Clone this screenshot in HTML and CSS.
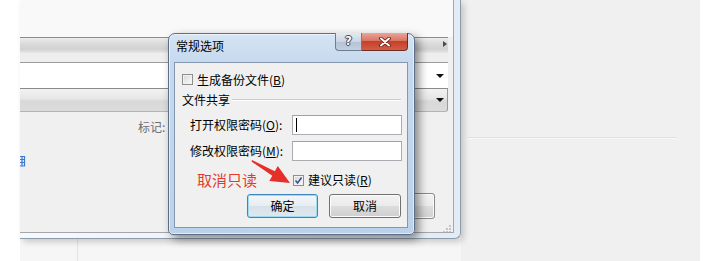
FILE: index.html
```html
<!DOCTYPE html>
<html lang="zh-CN">
<head>
<meta charset="utf-8">
<title>常规选项</title>
<link rel="stylesheet" href="styles.css">
</head>
<body>
<div class="screen">
  <div class="gutter"></div>
  <div class="parent-col">
    <div class="parent">
      <div class="parent-body">
        <div class="pb-top"></div>
        <div class="pb-bar1"><span class="arr-right"></span></div>
        <div class="pb-field"><span class="arr-down"></span></div>
        <div class="pb-bar2"><span class="arr-down"></span></div>
        <div class="pb-rest">
          <div class="tag-row">标记:</div>
          <div class="link-row">
            <svg class="link-icon" width="6" height="12" viewBox="0 0 6 12">
              <path d="M0 1.5 H4.5 V11 H0 M0 4.5 H4.5 M0 7.5 H4.5 M2 1.5 V11" fill="none" stroke="#3a7bd0" stroke-width="1.2"/>
            </svg>
          </div>
          <div class="pbtn-row"><span class="pbtn"></span></div>
          <svg class="grip" width="8" height="8" viewBox="0 0 8 8">
            <rect x="6" y="0" width="2" height="2" fill="#c4c4c4"/>
            <rect x="3" y="3" width="2" height="2" fill="#c4c4c4"/>
            <rect x="6" y="3" width="2" height="2" fill="#c4c4c4"/>
            <rect x="0" y="6" width="2" height="2" fill="#c4c4c4"/>
            <rect x="3" y="6" width="2" height="2" fill="#c4c4c4"/>
            <rect x="6" y="6" width="2" height="2" fill="#c4c4c4"/>
          </svg>
        </div>
      </div>
    </div>
    <div class="below"><span class="below-line"></span></div>
  </div>
  <div class="desk"><div class="desk-line"></div></div>
  <div class="gutter"></div>

  <div class="dlg">
    <div class="dlg-title">
      <span class="dlg-caption">常规选项</span>
      <div class="cap-btns">
        <span class="cap-help">?</span>
        <span class="cap-close">
          <svg width="12" height="10" viewBox="0 0 12 10">
            <path d="M2 1.5 L10 8.5 M10 1.5 L2 8.5" stroke="#5b1a12" stroke-width="3.6" stroke-linecap="round"/>
            <path d="M2 1.5 L10 8.5 M10 1.5 L2 8.5" stroke="#ffffff" stroke-width="2" stroke-linecap="round"/>
          </svg>
        </span>
      </div>
    </div>
    <div class="dlg-content">
      <div class="chk-row"><span class="chk"></span><span class="chk-text">生成备份文件(<u>B</u>)</span></div>
      <div class="group-row"><span>文件共享</span><span class="group-line"></span></div>
      <div class="pw-row"><span class="pw-label">打开权限密码(<u>O</u>):</span><span class="pw-input"><span class="caret"></span></span></div>
      <div class="pw-row"><span class="pw-label">修改权限密码(<u>M</u>):</span><span class="pw-input"></span></div>
      <div class="note-row">
        <span class="note">取消只读</span>
        <span class="chk">
          <svg width="9" height="9" viewBox="0 0 9 9"><path d="M1.5 4.5 L3.6 7 L7.6 1.5" fill="none" stroke="#3a548f" stroke-width="1.6"/></svg>
        </span>
        <span class="chk-text">建议只读(<u>R</u>)</span>
      </div>
      <div class="btn-row">
        <span class="btn btn-default">确定</span>
        <span class="btn">取消</span>
      </div>
      <svg class="arrow" width="232" height="164" viewBox="0 0 232 164">
        <polygon points="77,97 99.8,108.3 102.8,103.1 115,120 94.3,117.9 97.3,112.7 76.5,98.6" fill="#e5302a"/>
      </svg>
    </div>
  </div>
</div>
</body>
</html>
```

FILE: styles.css
```css
* { box-sizing: border-box; }
html, body { margin: 0; padding: 0; }
body {
  width: 720px;
  height: 261px;
  overflow: hidden;
  background: #fff;
  font-family: "Noto Sans CJK SC", "Noto Sans", sans-serif;
  font-size: 12px;
  color: #000;
}
.screen { position: relative; display: flex; width: 720px; height: 261px; }
.gutter { width: 20px; flex: none; background: #fff; }

/* parent window (behind) */
.parent-col { width: 441px; flex: none; display: flex; flex-direction: column; }
.parent {
  position: relative;
  z-index: 1;
  height: 239px;
  flex: none;
  border-right: 1px solid #8d9aa9;
  border-bottom: 1px solid #8d9aa9;
  border-bottom-right-radius: 6px;
  background: linear-gradient(to right, #f6f9fc, #e3ebf4);
  padding: 0 6px 5px 0;
  box-shadow: 3px 3px 6px rgba(0,0,0,.18);
}
.parent-body {
  height: 100%;
  border-right: 1px solid #a6a6a6;
  border-bottom: 1px solid #a6a6a6;
  background: #f0f0f0;
  display: flex;
  flex-direction: column;
  overflow: hidden;
}
.pb-top { height: 37px; flex: none; background: #f9f9f9; }
.pb-bar1 {
  height: 25px; flex: none; margin-right: 5px;
  border-top: 1px solid #8c8c8c;
  background: linear-gradient(#ececec 0, #dadada 6px, #d2d2d2 11px, #dfdfdf 14px, #ededed 15px, #efefef 100%);
  display: flex; justify-content: flex-end; align-items: flex-start;
  padding: 3px 1px 0 0;
}
.pb-field {
  height: 26px; flex: none; margin-right: 5px;
  border-top: 1px solid #9a9a9a;
  background: #fff;
  display: flex; justify-content: flex-end; align-items: center;
  padding-right: 4px;
}
.pb-bar2 {
  height: 24px; flex: none; margin-right: 5px;
  border-top: 1px solid #8a8a8a;
  border-right: 1px solid #9a9a9a;
  border-bottom: 1px solid #b4b4b4;
  border-bottom-right-radius: 3px;
  background: linear-gradient(#f2f2f2 0, #e6e6e6 45%, #d8d8d8 55%, #dcdcdc 100%);
  display: flex; justify-content: flex-end; align-items: center;
  padding-right: 3px;
}
.arr-right {
  width: 0; height: 0;
  border-left: 4px solid #4a4a4a;
  border-top: 3px solid transparent;
  border-bottom: 3px solid transparent;
}
.arr-down {
  width: 0; height: 0;
  border-top: 4px solid #111;
  border-left: 4px solid transparent;
  border-right: 4px solid transparent;
}
.pb-rest { flex: 1; display: flex; flex-direction: column; }
.tag-row { margin-top: 7px; height: 16px; line-height: 16px; padding-left: 118px; color: #6e6e6e; }
.link-row { margin-top: 20px; height: 12px; display: flex; }
.link-icon { display: block; }
.pbtn-row { margin-top: 26px; height: 26px; display: flex; justify-content: flex-end; padding-right: 18px; }
.pbtn {
  width: 72px; height: 26px;
  border: 1px solid #8a8a8a; border-radius: 3px;
  background: linear-gradient(#f2f2f2, #ebebeb 50%, #dddddd 50%, #d2d2d2);
  box-shadow: inset 0 0 0 1px #fafafa;
}
.grip { align-self: flex-end; margin-top: 6px; margin-right: 2px; }
.below { flex: 1; background: #f6f6f6; padding-left: 57px; }
.below-line { display: block; width: 1px; height: 100%; background: #e3e3e3; }

.desk { width: 239px; flex: none; background: #f0f0f0; padding-top: 137px; }
.desk-line { margin-left: 6px; width: 210px; height: 2px; border-top: 1px solid #e2e2e2; border-bottom: 1px solid #f8f8f8; }

/* dialog */
.dlg {
  position: absolute;
  left: 168px; top: 33px;
  width: 247px; height: 202px;
  z-index: 5;
  border: 1px solid #5c6f87;
  border-radius: 7px 7px 5px 5px;
  background: linear-gradient(to bottom, #d6e4f3 0, #c6d9ee 28px, #bcd2ea 100%);
  box-shadow: inset 0 0 0 1px rgba(255,255,255,.55), 4px 4px 10px rgba(0,0,0,.45);
  padding: 0 6px 6px 5px;
  display: flex;
  flex-direction: column;
}
.dlg-title { height: 28px; flex: none; display: flex; justify-content: space-between; align-items: flex-start; }
.dlg-caption { margin-top: 4px; margin-left: 2px; line-height: 16px; color: #000; }
.cap-btns { display: flex; margin-top: -1px; }
.cap-help {
  width: 27px; height: 18px;
  border: 1px solid #6b7d93; border-top: none;
  border-radius: 0 0 0 4px;
  background: linear-gradient(#e3e9f0, #cbd6e1 50%, #b3c3d4 50%, #c2d0df);
  color: #f4f7fb; font-family: "DejaVu Sans", sans-serif; font-weight: bold; font-size: 12px;
  line-height: 17px; text-align: center;
  text-shadow: 1px 0 0 #3a4b62, -1px 0 0 #3a4b62, 0 1px 0 #3a4b62, 0 -1px 0 #3a4b62;
}
.cap-close {
  width: 46px; height: 18px;
  border: 1px solid #6e2c23; border-left: none; border-top: none;
  border-radius: 0 0 4px 0;
  background: linear-gradient(#eaa597, #da7563 45%, #c5402b 50%, #d45c45 100%);
  display: flex; align-items: center; justify-content: center;
}
.dlg-content {
  position: relative;
  flex: 1;
  border: 1px solid #8497ae;
  background: #f0f0f0;
  padding: 0 5px 0 7px;
  display: flex;
  flex-direction: column;
}
.chk-row { margin-top: 7px; height: 19px; display: flex; align-items: center; }
.chk {
  width: 11px; height: 11px; flex: none;
  border: 1px solid #8e8f8f;
  background: linear-gradient(135deg, #d8d8d8, #fbfbfb);
  box-shadow: inset 0 0 0 1px #f2f2f2;
  display: flex; align-items: center; justify-content: center;
}
.chk-text { margin-left: 4px; line-height: 16px; }
.group-row { height: 20px; display: flex; align-items: center; }
.group-line { flex: 1; height: 2px; margin: 1px 1px 0 2px; border-top: 1px solid #c4ccd2; border-bottom: 1px solid #fff; }
.pw-row { margin-top: 6px; height: 20px; display: flex; align-items: center; }
.pw-label { padding-left: 8px; line-height: 16px; }
.pw-input {
  margin-left: auto; width: 110px; height: 20px;
  border: 1px solid #abadb3; border-top-color: #9ea1a8;
  background: #fff;
  padding: 2px 0 0 3px;
}
.caret { display: block; width: 1px; height: 14px; background: #000; }
.note-row { margin-top: 9px; height: 20px; display: flex; align-items: center; }
.note { width: 111px; padding-left: 15px; font-size: 15px; line-height: 20px; color: #e43a2e; }
.btn-row { margin-top: 4px; height: 24px; display: flex; justify-content: flex-end; gap: 11px; padding-right: 1px; }
.btn {
  width: 72px; height: 24px;
  border: 1px solid #707070; border-radius: 3px;
  background: linear-gradient(#f2f2f2, #ebebeb 50%, #dddddd 50%, #cfcfcf);
  box-shadow: inset 0 0 0 1px #fcfcfc;
  display: flex; align-items: center; justify-content: center;
  line-height: 16px;
}
.btn-default {
  width: 71px;
  border-color: #3c86ba;
  background: linear-gradient(#f3f7fa, #e6edf2 50%, #d7e1e8 50%, #dfe8ee);
  box-shadow: inset 0 0 0 1px #9fdcf4;
}
.arrow { position: absolute; left: 0; top: 0; overflow: visible; }
```
